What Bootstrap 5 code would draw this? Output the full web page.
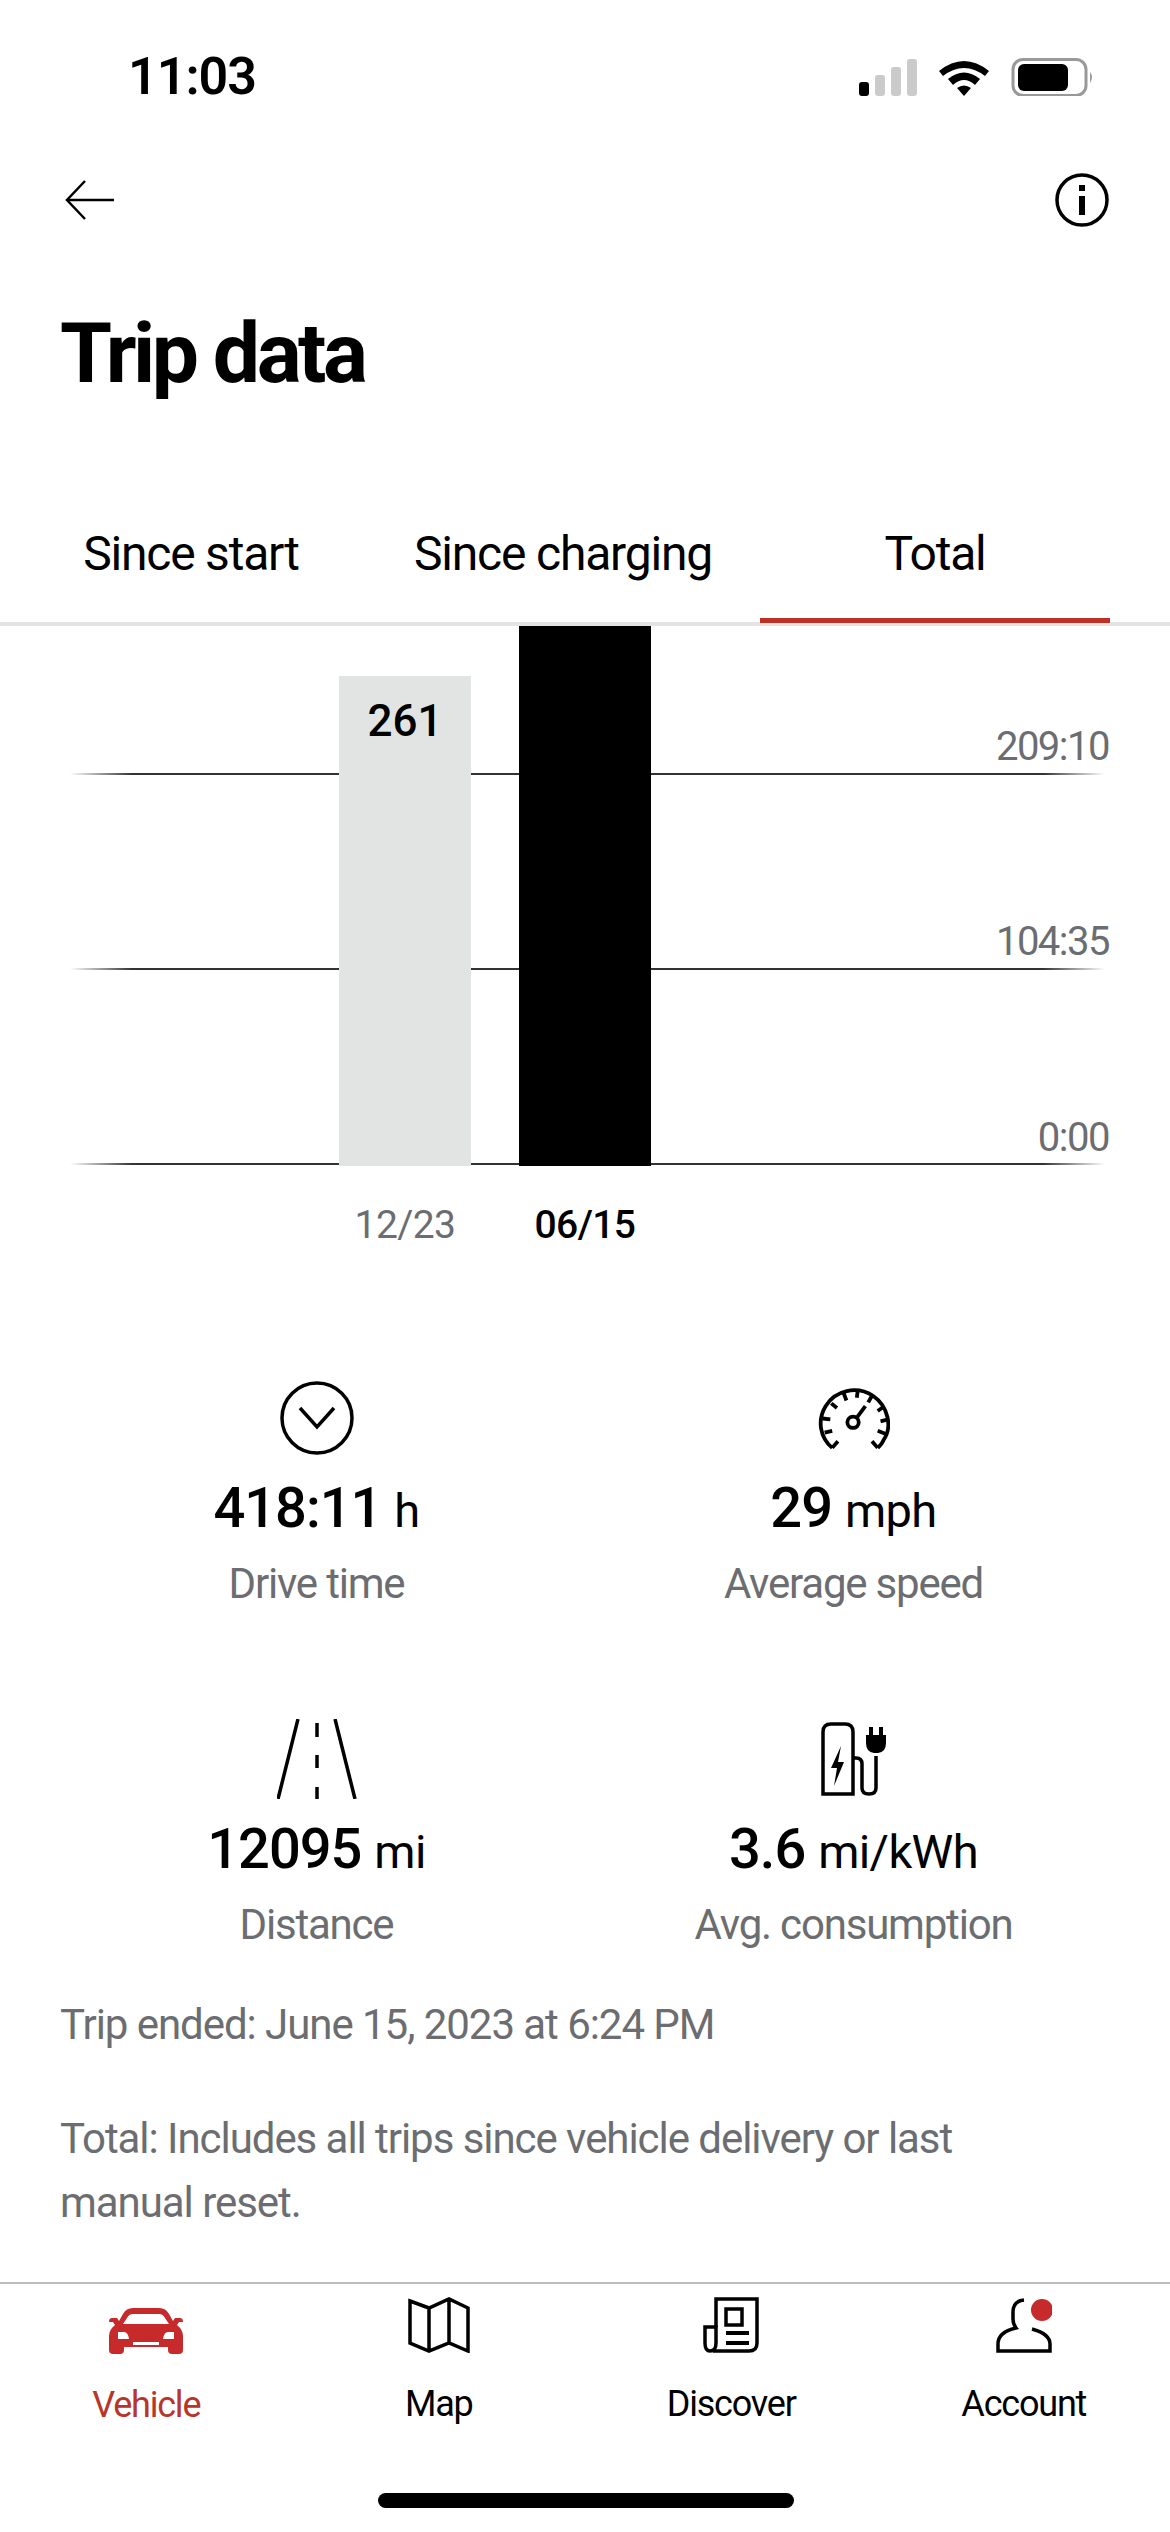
<!DOCTYPE html>
<html lang="en">
<head>
<meta charset="UTF-8">
<meta name="viewport" content="width=device-width, initial-scale=1.0">
<title>Trip data</title>
<link href="https://cdn.jsdelivr.net/npm/bootstrap@5.3.2/dist/css/bootstrap.min.css" rel="stylesheet">
<style>
body { margin: 0; background: #fff; color: #000; font-family: Roboto, "Liberation Sans", sans-serif; }
.app-screen { width: 1170px; height: 2532px; overflow: hidden; }

.status-row { height: 154px; padding: 0 76px 0 128px; }
.status-time { font-size: 52px; font-weight: 600; letter-spacing: -1px; line-height: 1; }
.top-row { height: 92px; padding: 0 61px 0 64px; }

.page-title { font-size: 84px; font-weight: 700; letter-spacing: -3.5px; line-height: 100px; margin: 58px 0 0; padding-left: 60px; }

.tab-row { margin-top: 88px; height: 134px; border-bottom: 4px solid #e3e4e4; padding-left: 16px; gap: 22px; }
.tab-item { color: #000; font-size: 48px; letter-spacing: -1.2px; line-height: 1; text-decoration: none; text-align: center; padding-top: 38px; position: relative; flex: 0 0 350px; }
.tab-item.is-active::after { content: ""; position: absolute; left: 0; right: 0; bottom: -1px; height: 5px; background: #bf3024; }

.chart-box { position: relative; height: 540px; }
.chart-line { position: absolute; left: 70px; width: 1035px; height: 2px; background: linear-gradient(90deg, transparent, #333 6%, #333 94%, transparent); }
.chart-val { position: absolute; right: 61px; font-size: 40px; line-height: 1; letter-spacing: -1.5px; color: #6b6d70; }
.chart-bars { position: relative; height: 100%; padding-left: 339px; gap: 48px; }
.chart-bar { width: 132px; }
.bar-old { background: #e2e4e4; }
.bar-new { background: #000; }
.bar-num { font-size: 44px; font-weight: 500; text-align: center; line-height: 1; padding-top: 23px; }
.chart-dates { padding-left: 339px; gap: 48px; margin-top: 36px; font-size: 39px; line-height: 46px; }
.chart-dates span { width: 132px; text-align: center; letter-spacing: -.6px; }
.date-old { color: #6b6d70; }
.date-new { font-weight: 500; }

.stat-grid { margin: 125px 0 0; padding: 0 48px; --bs-gutter-x: 0; row-gap: 100px; }
.stat-cell { text-align: center; }
.stat-icon { height: 90px; }
.stat-value { font-size: 56px; font-weight: 500; line-height: 80px; letter-spacing: -1px; margin-top: 5px; }
.stat-unit { font-size: 47px; font-weight: 400; letter-spacing: -.6px; }
.stat-name { font-size: 42px; line-height: 60px; letter-spacing: -1.2px; color: #6b6d70; margin-top: 3px; }

.note-text { color: #6b6d70; font-size: 42px; line-height: 64px; letter-spacing: -1.05px; padding: 0 200px 0 60px; margin: 0; }
.note-first { margin-top: 38px; }
.note-second { margin-top: 50px; }

.tab-bar { height: 250px; border-top: 2px solid #bdbdbd; position: relative; }
.bar-item { text-align: center; color: #000; font-size: 36px; letter-spacing: -1.2px; line-height: 44px; padding-top: 13px; text-decoration: none; }
.bar-item svg { display: block; margin: 0 auto 29px; }
.bar-item.is-active { color: #b8352a; }
.bar-item .car-icon { margin-top: 11px; }
.home-pill { position: absolute; left: 378px; bottom: 24px; width: 416px; height: 15px; border-radius: 8px; background: #000; }
</style>
</head>
<body>
<div class="app-screen d-flex flex-column">

    <!-- status bar -->
    <div class="status-row d-flex align-items-center justify-content-between">
        <span class="status-time">11:03</span>
        <svg width="235" height="38" viewBox="0 0 235 38">
            <rect x="0" y="24" width="10" height="14" rx="3" fill="#000"/>
            <rect x="16" y="17" width="10" height="21" rx="3" fill="#cbcbcb"/>
            <rect x="32" y="9" width="10" height="29" rx="3" fill="#cbcbcb"/>
            <rect x="48" y="1" width="10" height="37" rx="3" fill="#cbcbcb"/>
            <path d="M80 13 Q105 -7 130 13 L126 18 Q105 2 84 18 Z" fill="#000"/>
            <path d="M89 21 Q105 8 121 21 L116 27 Q105 17 94 27 Z" fill="#000"/>
            <path d="M98 30 Q105 25 112 30 L105 38 Z" fill="#000"/>
            <rect x="154" y="1.5" width="73" height="36" rx="10" fill="none" stroke="#999" stroke-width="3"/>
            <rect x="159" y="6" width="50" height="27" rx="6" fill="#000"/>
            <path d="M231 14 Q235 19 231 25 Z" fill="#999"/>
        </svg>
    </div>

    <!-- back and info -->
    <div class="top-row d-flex align-items-center justify-content-between">
        <svg width="52" height="44" viewBox="0 0 52 44" fill="none" stroke="#000" stroke-width="2.5">
            <path d="M50 22H3"/><path d="M21 3 3 22l18 19"/>
        </svg>
        <svg width="54" height="54" viewBox="0 0 54 54">
            <circle cx="27" cy="27" r="25" fill="none" stroke="#000" stroke-width="3.5"/>
            <rect x="24" y="12" width="6" height="6" fill="#000"/>
            <rect x="24" y="23" width="6" height="19" fill="#000"/>
        </svg>
    </div>

    <h1 class="page-title">Trip data</h1>

    <!-- tabs -->
    <div class="tab-row d-flex">
        <a class="tab-item" href="#">Since start</a>
        <a class="tab-item" href="#">Since charging</a>
        <a class="tab-item is-active" href="#">Total</a>
    </div>

    <!-- chart -->
    <div class="chart-box">
        <div class="chart-line" style="top:147px"></div>
        <div class="chart-line" style="top:342px"></div>
        <div class="chart-line" style="top:537px"></div>
        <span class="chart-val" style="top:101px">209:10</span>
        <span class="chart-val" style="top:296px">104:35</span>
        <span class="chart-val" style="top:492px">0:00</span>
        <div class="chart-bars d-flex align-items-end">
            <div class="chart-bar bar-old bar-num" style="height:490px">261</div>
            <div class="chart-bar bar-new" style="height:540px"></div>
        </div>
    </div>
    <div class="chart-dates d-flex">
        <span class="date-old">12/23</span>
        <span class="date-new">06/15</span>
    </div>

    <!-- stats -->
    <div class="row stat-grid">
        <div class="col-6 stat-cell">
            <div class="stat-icon d-flex align-items-center justify-content-center">
                <svg width="76" height="76" viewBox="0 0 76 76" fill="none" stroke="#000" stroke-width="3.5">
                    <circle cx="38" cy="38" r="35"/><path d="M21 28 38 47 55 28"/>
                </svg>
            </div>
            <div class="stat-value">418:11 <span class="stat-unit">h</span></div>
            <div class="stat-name">Drive time</div>
        </div>
        <div class="col-6 stat-cell">
            <div class="stat-icon d-flex align-items-center justify-content-center">
                <svg width="72" height="63" viewBox="0 0 76 66" fill="none" stroke="#000" stroke-width="4">
                    <path d="M15 64C2 53-1 35 8 20 18 3 41-2 58 9c16 11 21 33 11 47-1 3-4 6-6 8"/>
                    <path d="M15 64l6-7M63 64l-6-7"/>
                    <path d="M5 33l8 1M7 48l8-2M14 17l6 5M27 6l3 8M42 3l-1 8M57 9l-4 7M70 20l-7 5M74 34l-8 2M71 49l-8-3"/>
                    <circle cx="37" cy="37" r="6"/><path d="M41 32l9-12"/>
                </svg>
            </div>
            <div class="stat-value">29 <span class="stat-unit">mph</span></div>
            <div class="stat-name">Average speed</div>
        </div>
        <div class="col-6 stat-cell">
            <div class="stat-icon d-flex align-items-center justify-content-center">
                <svg width="80" height="80" viewBox="0 0 80 80" fill="none" stroke="#000" stroke-width="3.5">
                    <path d="M21 0 1 80M58 0l20 80"/><path d="M40 4v14M40 36v13M40 68v12"/>
                </svg>
            </div>
            <div class="stat-value">12095 <span class="stat-unit">mi</span></div>
            <div class="stat-name">Distance</div>
        </div>
        <div class="col-6 stat-cell">
            <div class="stat-icon d-flex align-items-center justify-content-center">
                <svg width="66" height="74" viewBox="0 0 66 74" fill="none" stroke="#000" stroke-width="3.5">
                    <path d="M2 72V10Q2 2 10 2H24Q32 2 32 10V72Z"/>
                    <path d="M32 36h3q6 0 6 6v24q0 6 7 6t7-6V34"/>
                    <path d="M20 24 10 46h6l-3 18 10-24h-6z" fill="#000" stroke="none"/>
                    <path d="M45 13h20v8q0 9-8 10h-4q-8-1-8-10z" fill="#000" stroke="none"/>
                    <rect x="48" y="5" width="4" height="9" fill="#000" stroke="none"/>
                    <rect x="58" y="5" width="4" height="9" fill="#000" stroke="none"/>
                </svg>
            </div>
            <div class="stat-value">3.6 <span class="stat-unit">mi/kWh</span></div>
            <div class="stat-name">Avg. consumption</div>
        </div>
    </div>

    <p class="note-text note-first">Trip ended: June 15, 2023 at 6:24 PM</p>
    <p class="note-text note-second">Total: Includes all trips since vehicle delivery or last manual reset.</p>

    <!-- bottom navigation -->
    <nav class="tab-bar d-flex mt-auto">
        <a class="bar-item flex-fill w-25 is-active" href="#">
            <svg class="car-icon" width="74" height="46" viewBox="0 0 74 46">
                <path fill="#c72a2b" d="M24 0H50Q57 0 60 6L64 13 66 10H71Q74 10 74 14H70L68 17Q74 22 74 28V42Q74 46 70 46H63Q59 46 59 42V39H15V42Q15 46 11 46H4Q0 46 0 42V28Q0 22 6 17L4 14H0Q0 10 3 10H8L10 13 14 6Q17 0 24 0ZM24 6Q20 6 18 10L14 16H60L56 10Q54 6 50 6ZM9 24V31H20Q19 24 15 24ZM59 24Q55 24 54 31H65V24ZM24 34V37H50V34Z" fill-rule="evenodd"/>
            </svg>
            Vehicle
        </a>
        <a class="bar-item flex-fill w-25" href="#">
            <svg width="62" height="56" viewBox="0 0 62 56" fill="none" stroke="#000" stroke-width="3.5">
                <path d="M2 4 21 11 41 2 60 11V54L41 46 21 54 2 46ZM21 11V54M41 2V46"/>
            </svg>
            Map
        </a>
        <a class="bar-item flex-fill w-25" href="#">
            <svg width="56" height="56" viewBox="0 0 56 56" fill="none" stroke="#000" stroke-width="3.5">
                <path d="M13 30V2H54V46Q54 54 46 54H10"/>
                <path d="M2 30H13V46Q13 54 7 54Q2 54 2 46Z"/>
                <rect x="23" y="12" width="16" height="16"/>
                <path d="M23 36H46" stroke-width="4"/><path d="M23 46H46" stroke-width="4"/>
            </svg>
            Discover
        </a>
        <a class="bar-item flex-fill w-25" href="#">
            <svg width="56" height="56" viewBox="0 0 56 56" fill="none" stroke="#000" stroke-width="3.5">
                <path d="M28 3Q17 4 17 15V22Q17 27 20 31Q2 35 2 47V54H54V47Q54 37 36 32"/>
                <circle cx="46" cy="13" r="11" fill="#c72a2b" stroke="none"/>
            </svg>
            Account
        </a>
        <div class="home-pill"></div>
    </nav>
</div>
</body>
</html>
